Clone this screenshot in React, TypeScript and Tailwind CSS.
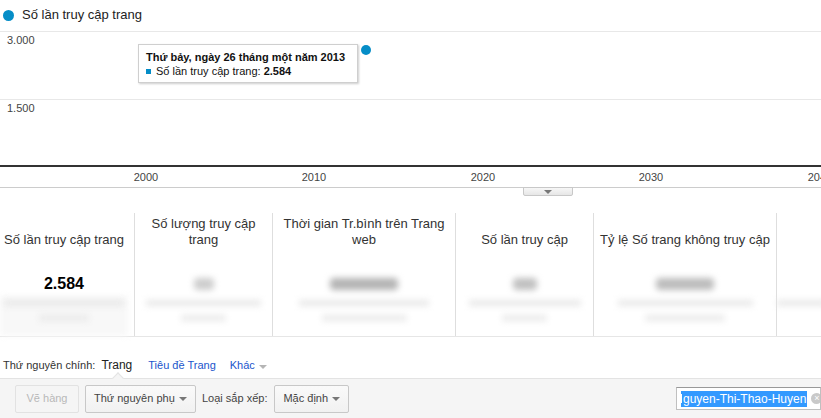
import React from "react";

const BLUE = "bg-[#058dc7]";

function Caret({ color = "border-t-[#777]" }: { color?: string }) {
  return (
    <span
      className={`inline-block h-0 w-0 border-x-[4px] border-t-[4px] border-x-transparent ${color}`}
    />
  );
}

function Legend() {
  return (
    <div className="flex h-[31px] items-start pt-[7px]">
      <span className={`ml-[3px] mt-[3px] h-[11px] w-[11px] rounded-full ${BLUE}`} />
      <span className="ml-[8px] text-[13px] leading-[16px] text-[#222]">Số lần truy cập trang</span>
    </div>
  );
}

const xTicks = [
  { label: "2000", c: 146 },
  { label: "2010", c: 314 },
  { label: "2020", c: 483 },
  { label: "2030", c: 651 },
  { label: "2040", c: 820 },
];

function Chart() {
  return (
    <div className="relative h-[165px]">
      <div className="absolute left-0 right-0 top-0 h-px bg-[#e8e8e8]" />
      <div className="absolute left-[7px] top-[3px] text-[11px] leading-[13px] text-[#444]">3.000</div>
      <div className="absolute left-0 right-0 top-[68px] h-px bg-[#e8e8e8]" />
      <div className="absolute left-[7px] top-[71px] text-[11px] leading-[13px] text-[#444]">1.500</div>
      <div className="absolute left-0 right-0 top-[134px] h-[2px] bg-[#333]" />
      {xTicks.map((t) => (
        <div
          key={t.label}
          className="absolute top-[140px] w-[40px] text-center text-[11px] leading-[13px] text-[#444]"
          style={{ left: t.c - 20 }}
        >
          {t.label}
        </div>
      ))}
      <div className="absolute left-0 right-0 top-[156px] h-px bg-[#cccccc]" />
      <div className="absolute left-[523px] top-[156px] flex h-[9px] w-[50px] items-center justify-center rounded-b-[2px] border border-[#c8c8c8] bg-gradient-to-b from-[#f7f7f7] to-[#e6e6e6]">
        <Caret />
      </div>

      {/* data point */}
      <div className={`absolute left-[361px] top-[14px] h-[10px] w-[10px] rounded-full ${BLUE}`} />

      {/* tooltip */}
      <div className="absolute left-[138px] top-[13px] h-[39px] w-[220px] border border-[#cfcfcf] bg-white pl-[7px] pt-[5px] shadow-[1px_1px_2px_rgba(0,0,0,0.2)]">
        <div className="text-[11px] font-bold leading-[14px] text-[#111]">
          Thứ bảy, ngày 26 tháng một năm 2013
        </div>
        <div className="flex items-center text-[11px] leading-[14px] text-[#111]">
          <span className={`mr-[5px] h-[5px] w-[5px] ${BLUE}`} />
          Số lần truy cập trang:&nbsp;<b>2.584</b>
        </div>
      </div>
    </div>
  );
}

type Card = {
  title: string;
  width: string;
  value?: React.ReactNode;
  blob?: string;
  l1: string;
  l2: string;
  border: boolean;
  pad?: string;
};

function Bar({ cls }: { cls: string }) {
  return <div className={`blur-[3px] ${cls}`} />;
}

const cards: Card[] = [
  {
    title: "Số lần truy cập trang",
    width: "w-[135px]",
    value: "2.584",
    l1: "w-[120px]",
    l2: "w-[50px]",
    border: true,
    pad: "pr-[6px]",
  },
  { title: "Số lượng truy cập trang", width: "w-[138px]", blob: "w-[20px] bg-[#cdcdcd]", l1: "w-[115px]", l2: "w-[45px]", border: true },
  { title: "Thời gian Tr.bình trên Trang web", width: "w-[183px]", blob: "w-[68px] bg-[#b4b4b4]", l1: "w-[130px]", l2: "w-[85px]", border: true },
  { title: "Số lần truy cập", width: "w-[138px]", blob: "w-[24px] bg-[#c0c0c0]", l1: "w-[112px]", l2: "w-[45px]", border: true },
  { title: "Tỷ lệ Số trang không truy cập", width: "w-[183px]", blob: "w-[58px] bg-[#bcbcbc]", l1: "w-[135px]", l2: "w-[80px]", border: true },
  { title: "", width: "flex-1", l1: "w-[50px]", l2: "w-0", border: false },
];

function Scorecards() {
  return (
    <div className="flex h-[141px] border-b border-[#e6e6e6] pt-[17px]">
      {cards.map((c, i) => (
        <div
          key={i}
          className={`relative flex shrink-0 flex-col items-center ${c.width} ${c.border ? "border-r border-[#dedede]" : ""} ${c.pad ?? ""}`}
        >
          {i === 0 && <div className="absolute bottom-0 left-0 top-[83px] w-[128px] bg-[#f8f8f8] blur-[3px]" />}
          <div className="flex h-[35px] items-end justify-center px-[4px] text-center text-[13px] leading-[16px] text-[#333]">
            {c.title}
          </div>
          <div className="relative mt-[26px] flex h-[20px] items-center justify-center">
            {c.value ? (
              <span className="text-[16px] font-bold leading-[20px] text-black">{c.value}</span>
            ) : c.blob ? (
              <Bar cls={`h-[12px] rounded-[4px] ${c.blob}`} />
            ) : null}
          </div>
          <div className="relative mt-[6px] flex h-[6px] items-center">
            <Bar cls={`h-[6px] bg-[#e8e8e8] ${c.l1}`} />
          </div>
          <div className="relative mt-[9px] flex h-[6px] items-center">
            <Bar cls={`h-[6px] bg-[#eaeaea] ${c.l2}`} />
          </div>
        </div>
      ))}
    </div>
  );
}

function DimensionRow() {
  return (
    <div className="flex h-[41px] items-end pb-[6px] pl-[3px] text-[11px] leading-[14px]">
      <span className="text-[#333]">Thứ nguyên chính:</span>
      <span className="ml-[6px] text-[12px] text-[#222]">Trang</span>
      <span className="ml-[16px] text-[#1a55cc]">Tiêu đề Trang</span>
      <span className="ml-[14px] flex items-center text-[#1a55cc]">
        Khác
        <span className="ml-[4px]">
          <Caret color="border-t-[#b5b5b5]" />
        </span>
      </span>
    </div>
  );
}

function Toolbar() {
  return (
    <div className="relative flex h-[40px] items-center border-t border-[#e3e3e3] bg-[#f5f5f5] text-[11px] text-[#444]">
      <div className="absolute left-[114px] top-[-5px] h-[8px] w-[8px] rotate-45 border-l border-t border-[#e3e3e3] bg-[#f5f5f5]" />
      <button className="ml-[15px] h-[28px] w-[64px] rounded-[2px] border border-[#e2e2e2] bg-[#f5f5f5] text-[#b8b8b8]">
        Vẽ hàng
      </button>
      <button className="ml-[6px] flex h-[28px] w-[111px] items-center justify-between rounded-[2px] border border-[#c8c8c8] bg-gradient-to-b from-[#fafafa] to-[#f1f1f1] pl-[8px] pr-[8px] text-[#444]">
        Thứ nguyên phụ
        <Caret />
      </button>
      <span className="ml-[6px]">Loại sắp xếp:</span>
      <button className="ml-[7px] flex h-[28px] w-[75px] items-center justify-between rounded-[2px] border border-[#c8c8c8] bg-gradient-to-b from-[#fafafa] to-[#f1f1f1] pl-[8px] pr-[8px] text-[#444]">
        Mặc định
        <Caret />
      </button>
      <div className="ml-auto flex h-[23px] w-[145px] shrink-0 items-center overflow-hidden border border-[#c0c0c0] border-t-[#999] bg-white">
        <span className="ml-[4px] flex h-[16px] shrink-0 items-center bg-[#3399ff] pr-[1px] text-[12px] leading-[16px] text-white">
          <span className="mr-[1px] h-[9px] w-px bg-white" />
          guyen-Thi-Thao-Huyen
        </span>
        <span className="ml-[4px] flex h-[11px] w-[11px] shrink-0 items-center justify-center rounded-full bg-[#c9c9c9] text-[9px] leading-none text-white">
          ×
        </span>
      </div>
    </div>
  );
}

export default function App() {
  return (
    <div className="h-[418px] w-[821px] overflow-hidden bg-white font-['Liberation_Sans',Arial,sans-serif]">
      <Legend />
      <Chart />
      <Scorecards />
      <DimensionRow />
      <Toolbar />
    </div>
  );
}
